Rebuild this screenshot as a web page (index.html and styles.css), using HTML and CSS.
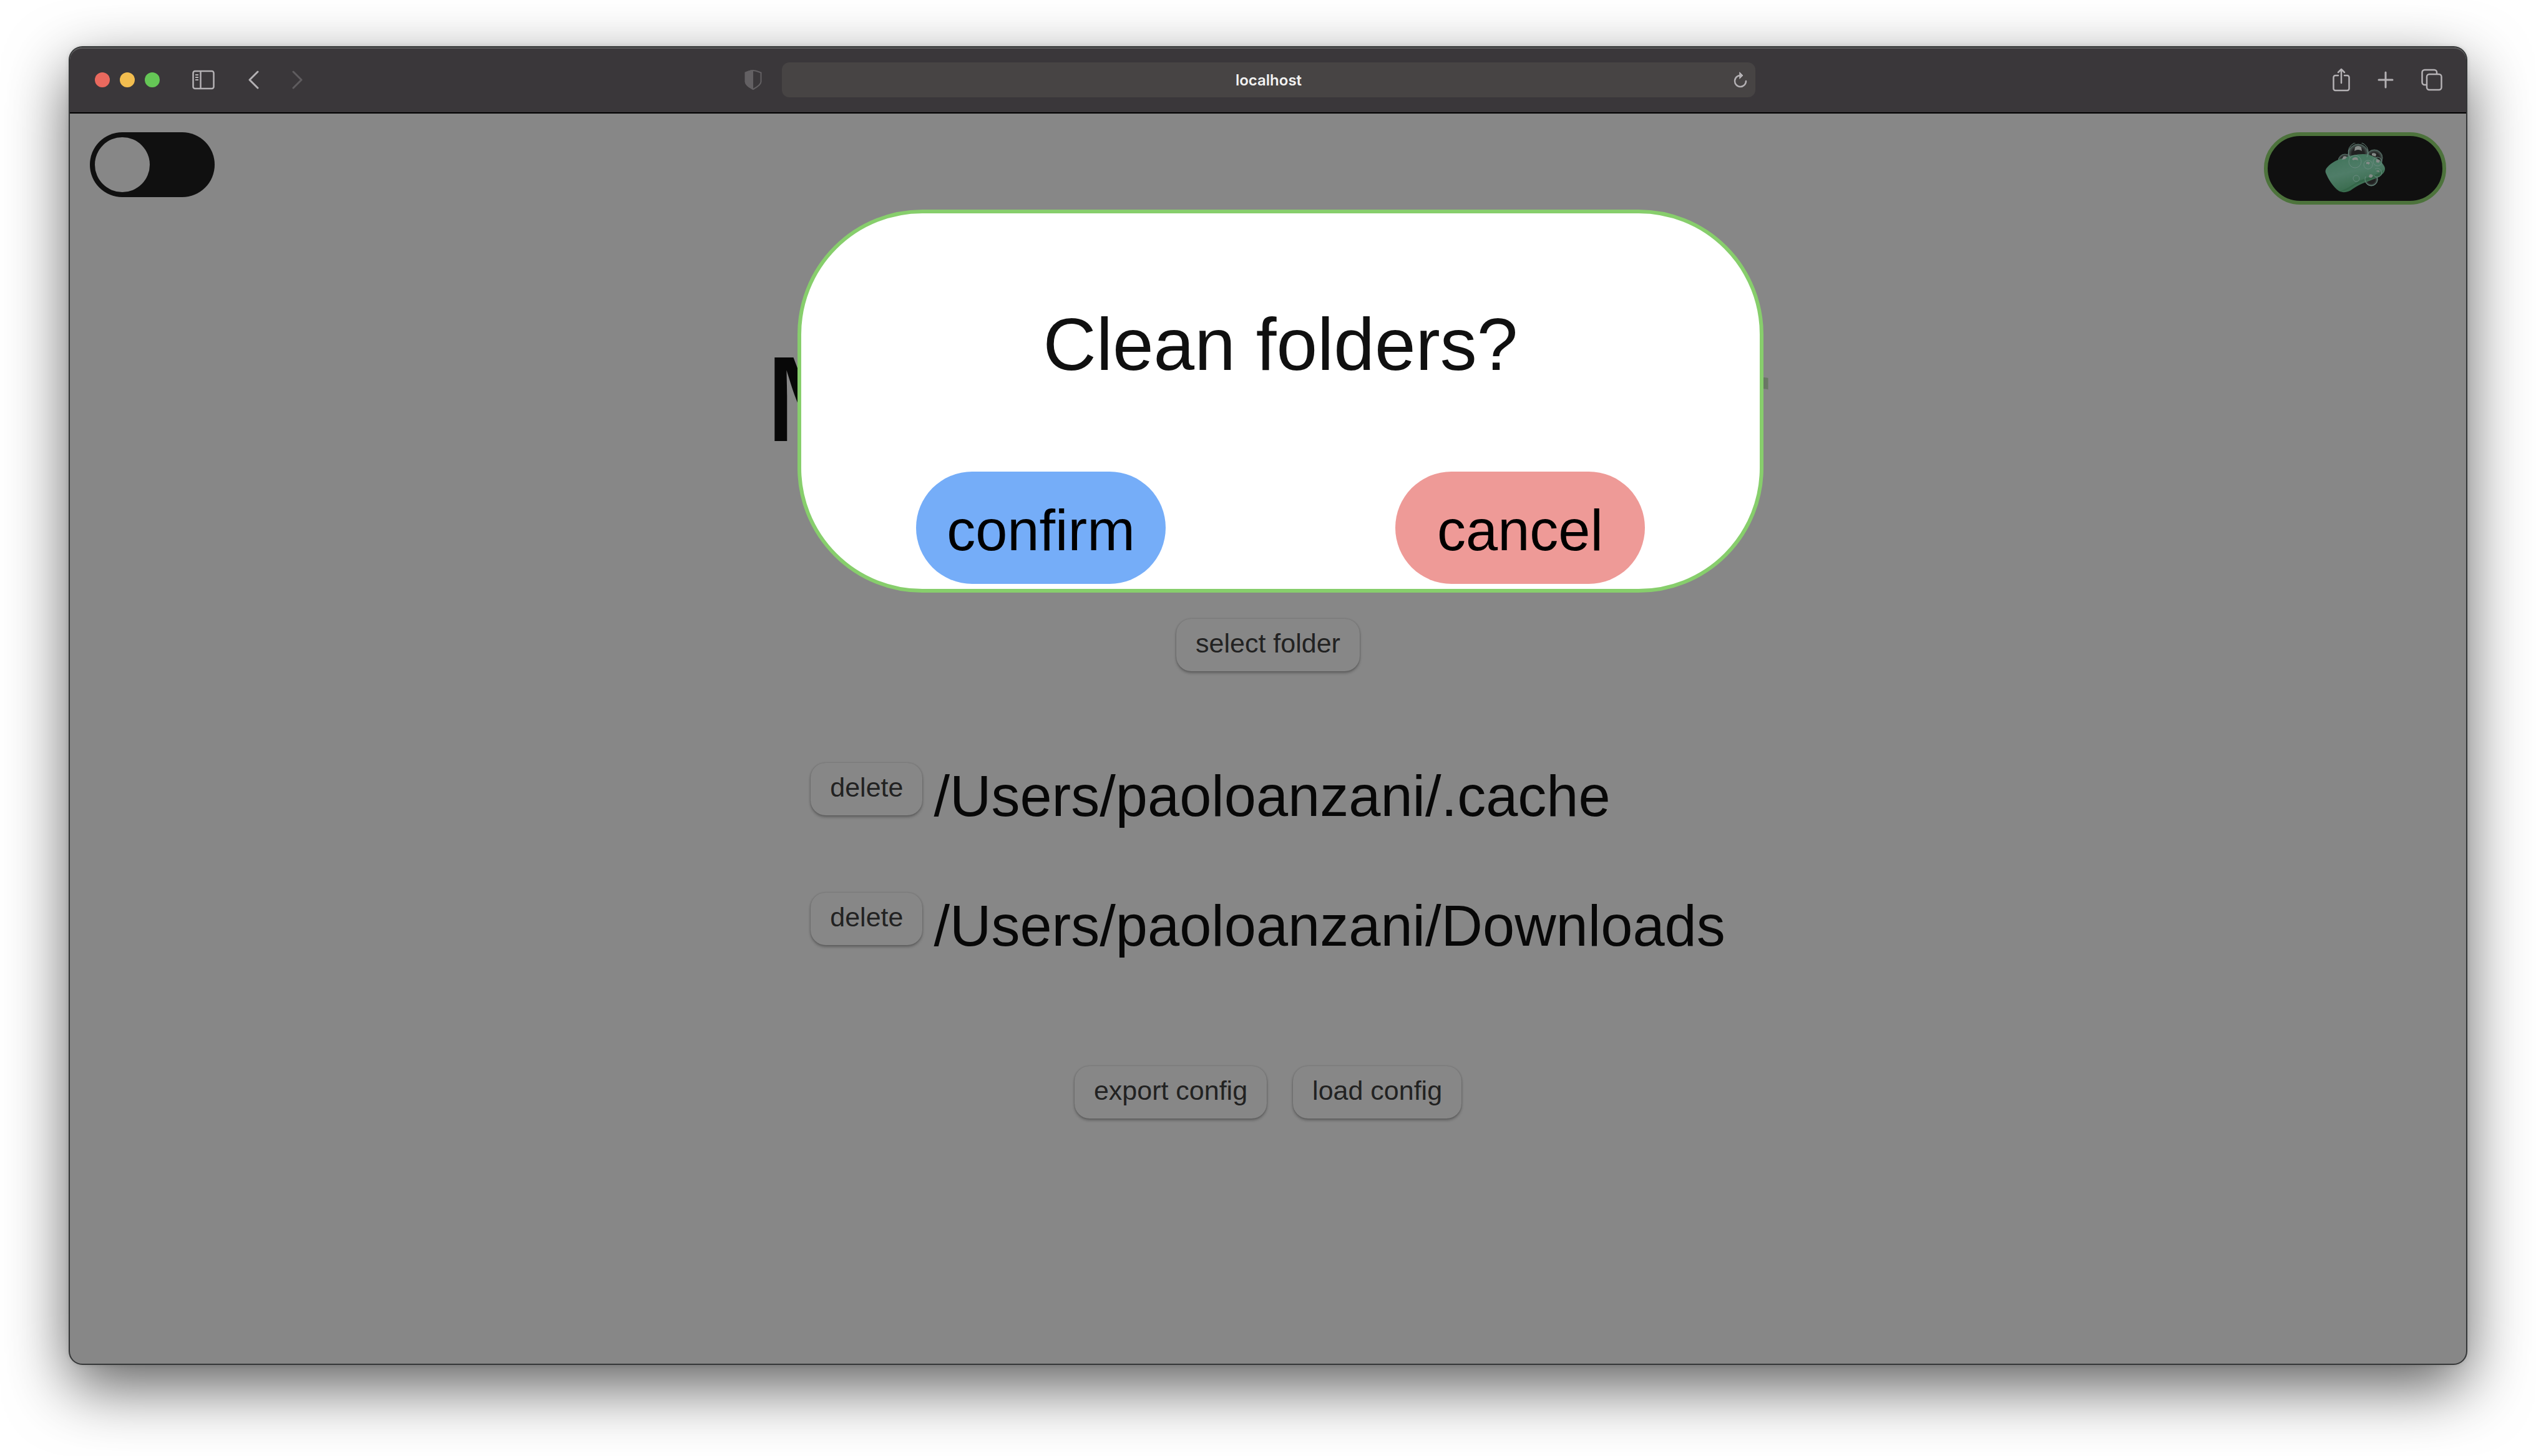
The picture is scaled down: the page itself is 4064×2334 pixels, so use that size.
FILE: index.html
```html
<!DOCTYPE html>
<html lang="en">
<head>
<meta charset="utf-8">
<title>localhost</title>
<link rel="stylesheet" href="styles.css">
</head>
<body>
<div class="window">
  <header class="toolbar">
    <div class="tools tools-left">
      <div class="lights"><span class="light close"></span><span class="light minimise"></span><span class="light expand"></span></div>
      <button class="tool sidebar" aria-label="Sidebar"><svg width="36" height="32" viewBox="0 0 36 32" fill="none" stroke="currentColor" stroke-width="2.500"><rect x="1.500" y="2" width="33" height="28" rx="3"/><path d="M13.500 2v28"/><path d="M5 8h5M5 12h5M5 16h5" stroke-width="2"/></svg></button>
      <button class="tool back" aria-label="Back"><svg width="18" height="30" viewBox="0 0 18 30" fill="none" stroke="currentColor" stroke-width="3" stroke-linecap="round" stroke-linejoin="round"><path d="M15 2 2 15l13 13"/></svg></button>
      <button class="tool forward" aria-label="Forward"><svg width="18" height="30" viewBox="0 0 18 30" fill="none" stroke="currentColor" stroke-width="3" stroke-linecap="round" stroke-linejoin="round"><path d="M2 2l13 13L2 28"/></svg></button>
    </div>
    <div class="location">
      <button class="tool shield" aria-label="Privacy report"><svg width="28" height="34" viewBox="0 0 28 34"><path d="M14 2C10 2 6 4 1.500 5.500V20c0 5 7 9 12.500 12C19.500 29 26.500 25 26.500 20V5.500C22 4 18 2 14 2z" fill="none" stroke="currentColor" stroke-width="2"/><path d="M14 1C10 1 5 3 1 5v15c0 6 7 10 13 13z" fill="currentColor"/></svg></button>
      <div class="address">
        <input class="url" type="text" value="localhost" aria-label="Address">
        <button class="tool reload" aria-label="Reload"><svg width="24" height="26" viewBox="0 0 24 26" fill="none" stroke="currentColor" stroke-width="2.500" stroke-linecap="round" stroke-linejoin="round"><path d="M13 6A9 9 0 1 0 21 15"/><path d="M11 1l5 5-5 5z" fill="currentColor" stroke-width="1"/></svg></button>
      </div>
    </div>
    <div class="tools tools-right">
      <button class="tool" aria-label="Share"><svg width="28" height="38" viewBox="0 0 28 38" fill="none" stroke="currentColor" stroke-width="2.500" stroke-linecap="round" stroke-linejoin="round"><path d="M9 12H4.500a3 3 0 0 0-3 3v18a3 3 0 0 0 3 3h19a3 3 0 0 0 3-3V15a3 3 0 0 0-3-3H19M14 24V2M9 7l5-5 5 5"/></svg></button>
      <button class="tool" aria-label="New tab"><svg width="26" height="28" viewBox="0 0 26 28" fill="none" stroke="currentColor" stroke-width="3" stroke-linecap="round"><path d="M13 2v24M2 14h22"/></svg></button>
      <button class="tool" aria-label="Tab overview"><svg width="34" height="36" viewBox="0 0 34 36" fill="none" stroke="currentColor" stroke-width="2.500"><rect x="9" y="9" width="23.500" height="25" rx="4"/><path d="M9 26H5.500a4 4 0 0 1-4-4V6a4 4 0 0 1 4-4H21a4 4 0 0 1 4 4v3"/></svg></button>
    </div>
  </header>
  <main class="page">
    <div class="page-top">
      <label class="theme"><input class="theme-input" type="checkbox" role="switch" aria-label="Dark theme"></label>
      <button class="clean" aria-label="Clean folders">
        <svg width="96" height="82" viewBox="0 0 96 82">
          <defs>
            <linearGradient id="soap" x1="0" y1="0" x2="0.400" y2="1"><stop offset="0" stop-color="#3f7359"/><stop offset="0.550" stop-color="#4f7d68"/><stop offset="1" stop-color="#376a4b"/></linearGradient>
            <radialGradient id="bubble"><stop offset="0.600" stop-color="#555" stop-opacity="0.250"/><stop offset="1" stop-color="#6b8a80" stop-opacity="0.700"/></radialGradient>
          </defs>
          <g fill="url(#bubble)" stroke="#536b63" stroke-width="1"><circle cx="53" cy="18" r="16"/><circle cx="79" cy="24" r="13"/><circle cx="32" cy="29" r="11"/><circle cx="74" cy="59" r="10"/></g>
          <path d="M2 41C10 30 26 24 44 20c10-2 18-3 26-1 10 3 18 7 24 17 5 7 0 14-9 19-17 8-27 9-41 19-6 5-15 7-22 3C13 71 5 58 1 48c-1-3 0-5 1-7z" fill="url(#soap)"/>
          <path d="M23 78c8 0 16-4 24-10 13-7 25-8 37-14 6-3 9-7 10-11-11 9-25 12-37 17-12 6-21 14-34 18z" fill="#306345" opacity="0.700"/>
          <g fill="none" stroke="#6a8b7f" stroke-width="1"><circle cx="48" cy="30" r="10"/><circle cx="69" cy="35" r="7"/><circle cx="50" cy="57" r="5"/><circle cx="84" cy="30" r="7"/><path d="M80 42a7 7 0 1 1-2 10M65 54a10 10 0 1 0 18 0M40 24a16 16 0 1 1 27-1"/></g>
          <g fill="#858b88"><path d="M48 7q5-4 10 0l1 6q-6-4-12 0zM75 17q4-2 7 1l-1 4-6-2zM29 22q4-2 6 1l-3 3-5 1zM43 26q4-5 9-2l1 4q-5-2-8 0zM66 31q4-2 6 1l-2 3q-2-2-4-1zM71 51q4-2 6 2l-3 3-4-1zM82 26l6 2-2 4-4-1zM81 45l5-1 1 3z"/></g>
        </svg>
      </button>
    </div>
    <div class="content">
      <h1 class="title">My Folder Cleaner</h1>
      <button class="button">select folder</button>
      <ul class="folders">
        <li class="folder"><button class="button">delete</button><span class="path">/Users/paoloanzani/.cache</span></li>
        <li class="folder"><button class="button">delete</button><span class="path">/Users/paoloanzani/Downloads</span></li>
      </ul>
      <div class="actions"><button class="button">export config</button><button class="button">load config</button></div>
    </div>
    <div class="dialog" role="dialog" aria-labelledby="dialog-title">
      <h2 class="dialog-title" id="dialog-title">Clean folders?</h2>
      <div class="choices"><button class="choice confirm">confirm</button><button class="choice cancel">cancel</button></div>
    </div>
  </main>
</div>
</body>
</html>
```
FILE: styles.css
```css
* { box-sizing: border-box; }

body {
  margin: 0;
  min-height: 100vh;
  padding: 76px 112px 148px;
  display: flex;
  background: #fff;
  font-family: "Liberation Sans", Arial, sans-serif;
  color: #080808;
}

button, input { font: inherit; color: inherit; margin: 0; padding: 0; border: 0; background: none; }
h1, h2, ul { margin: 0; padding: 0; font-weight: 400; list-style: none; }
svg { display: block; }

.window {
  flex: 1;
  display: flex;
  flex-direction: column;
  border-radius: 20px;
  background: #878787;
  box-shadow: 0 0 0 2px #343637, 0 36px 100px rgba(0, 0, 0, 0.64), 0 0 8px rgba(0, 0, 0, 0.2);
}

.toolbar {
  display: grid;
  grid-template-columns: 1fr auto 1fr;
  align-items: center;
  height: 106px;
  padding: 0 38px 2px 40px;
  border-radius: 20px 20px 0 0;
  border-top: 2px solid #5c5b5c;
  border-bottom: 2px solid #000;
  background: #3a373a;
  color: #b4b1b4;
}
.tools { display: flex; align-items: center; }
.tools-right { justify-content: flex-end; gap: 44px; }
.lights { display: flex; gap: 16px; margin-right: 52px; }
.light { width: 24px; height: 24px; border-radius: 50%; }
.close { background: #e9695e; }
.minimise { background: #f2bd4f; }
.expand { background: #65c656; }
.back { margin-left: 54px; }
.forward { margin-left: 52px; color: #5f5c5f; }
.location { display: flex; align-items: center; gap: 32px; margin-left: -60px; }
.shield { color: #636063; }
.address {
  display: flex;
  align-items: center;
  width: 1560px;
  height: 56px;
  padding: 0 12px 0 36px;
  border-radius: 12px;
  background: #474444;
}
.url { flex: 1; text-align: center; font-family: Inter, sans-serif; font-size: 24px; font-weight: 600; color: #f2f2f2; }

.page { position: relative; flex: 1; }
.page-top { display: flex; justify-content: space-between; align-items: flex-start; padding: 30px 32px 0; }
.theme { display: block; }
.theme-input {
  appearance: none;
  display: block;
  width: 200px;
  height: 104px;
  padding: 8px;
  border-radius: 52px;
  background: #101010;
}
.theme-input::before { content: ""; display: block; width: 88px; height: 88px; border-radius: 50%; background: #878787; }
.clean {
  display: flex;
  align-items: center;
  justify-content: center;
  width: 292px;
  height: 116px;
  border: 6px solid #4d733c;
  border-radius: 60px;
  background: #101010;
}

.content { display: flex; flex-direction: column; align-items: center; padding-top: 196px; }
.title {
  margin-bottom: 236px;
  font-family: Inter, sans-serif;
  font-size: 184px;
  line-height: 232px;
  font-weight: 500;
  color: transparent;
  background: linear-gradient(90deg, #080808 50%, #6b7866);
  background-clip: text;
}
.button {
  height: 84px;
  padding: 0 31px 6px;
  border-radius: 24px;
  font-size: 43px;
  line-height: 48px;
  color: #222;
  box-shadow: 0 0 3px rgba(0, 0, 0, 0.2), 0 3px 4px rgba(0, 0, 0, 0.28);
}
.folders { display: grid; gap: 102px; margin-top: 147px; }
.folder { display: flex; align-items: flex-start; gap: 18px; }
.path { font-size: 92px; line-height: 106px; }
.actions { display: flex; gap: 42px; margin-top: 172px; }

.dialog {
  position: absolute;
  top: 154px;
  left: calc(50% + 20px);
  width: 1548px;
  transform: translateX(-50%);
  padding: 130px 0 8px;
  border: 6px solid #87ce6c;
  border-radius: 200px;
  background: #fff;
}
.dialog-title { font-size: 118px; line-height: 160px; text-align: center; color: #101010; }
.choices { display: grid; grid-template-columns: 1fr 1fr; justify-items: center; margin-top: 124px; }
.choice { width: 400px; height: 180px; padding-top: 8px; border-radius: 90px; font-size: 92px; color: #000; }
.confirm { background: #75adf8; }
.cancel { background: #ee9a97; }
```
